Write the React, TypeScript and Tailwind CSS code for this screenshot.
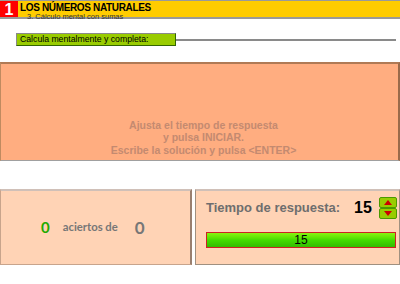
import React from "react";

export default function App() {
  const f = { fontFamily: '"Liberation Sans", Arial, sans-serif' };
  return (
    <div className="w-[400px] h-[284px] bg-white overflow-hidden relative" style={f}>
      {/* header */}
      <div className="h-[19px] border-t border-b-2 border-[#9a9a9a] bg-[#ffcc00] flex">
        <div className="w-[18px] h-full bg-[#ff0000] text-white font-bold text-[16px] leading-[17px] flex justify-center">1</div>
        <div className="pl-[2px] flex flex-col">
          <div className="text-[10px] font-bold leading-[11px] text-black mt-[1px] tracking-[-0.35px]">LOS NÚMEROS NATURALES</div>
          <div className="text-[7.5px] leading-[7px] text-[#333] pl-[7px]">3. Cálculo mental con sumas</div>
        </div>
      </div>

      {/* instruction */}
      <div className="flex items-center mt-[14px] pl-[16px] pr-[4px]">
        <div className="w-[160px] h-[13px] bg-[#99cc00] border border-t-[#8a8a8a] border-l-[#8a8a8a] border-r-[#336600] border-b-[#336600] text-[8.7px] leading-[11px] pl-[3px] text-black">
          Calcula mentalmente y completa:
        </div>
        <div className="flex-1 h-[2px] bg-[#8a8a8a]" />
      </div>

      {/* orange panel */}
      <div className="mt-[16px] h-[99px] bg-[#ffad80] border-t-2 border-[#b07a55] border-r-2 border-r-[#9a6a4a] border-b border-b-[#a0a0a0] border-l border-l-[#c08a60] flex flex-col items-center justify-end pb-[4px] pl-[8px]">
        <div className="text-[10.5px] font-bold leading-[12.5px] text-[#c48a70] text-center">
          Ajusta el tiempo de respuesta<br />y pulsa INICIAR.<br />Escribe la solución y pulsa &lt;ENTER&gt;
        </div>
      </div>

      {/* bottom panels */}
      <div className="mt-[28px] flex gap-[3px]">
        <div className="w-[192px] h-[76px] bg-[#ffd3b5] border border-[#c8a48c] border-r-2 border-r-[#9a8070] border-t-2 border-t-[#d0c0b8] flex items-center pl-[40px]">
          <span className="text-[15px] font-bold text-[#22aa00] mr-[13px]" style={{ fontFamily: 'Lato, "Liberation Sans", sans-serif' }}>0</span>
          <span className="text-[11.3px] font-bold text-[#777]" style={{ fontFamily: 'Lato, "Liberation Sans", sans-serif' }}>aciertos de</span>
          <span className="text-[17px] font-bold text-[#777] ml-[17px]" style={{ fontFamily: 'Lato, "Liberation Sans", sans-serif' }}>0</span>
        </div>
        <div className="flex-1 h-[76px] bg-[#ffd3b5] border border-[#a09080] border-t-2 border-t-[#d0c0b8] pl-[10px] pr-[2px] pt-[6px]">
          <div className="flex items-center h-[22px]">
            <span className="text-[13px] font-bold text-[#6e6e6e] w-[148px]">Tiempo de respuesta:</span>
            <span className="text-[16px] font-bold text-black w-[25px]">15</span>
            <div className="flex flex-col gap-0">
              <div className="w-[18px] h-[11px] bg-[#99cc00] border border-[#4a9a00] rounded-[2px] flex items-center justify-center">
                <div className="w-0 h-0 border-l-[4px] border-r-[4px] border-b-[5px] border-l-transparent border-r-transparent border-b-[#cc0000]" />
              </div>
              <div className="w-[18px] h-[11px] bg-[#99cc00] border border-[#4a9a00] rounded-[2px] flex items-center justify-center">
                <div className="w-0 h-0 border-l-[4px] border-r-[4px] border-t-[5px] border-l-transparent border-r-transparent border-t-[#cc0000]" />
              </div>
            </div>
          </div>
          <div className="mt-[13px] h-[16px] mr-[1px] border border-[#cc2222] bg-gradient-to-b from-[#88f410] via-[#44dd00] to-[#33bb00] flex items-center justify-center text-[12px] leading-[14px] text-black">
            15
          </div>
        </div>
      </div>
    </div>
  );
}
